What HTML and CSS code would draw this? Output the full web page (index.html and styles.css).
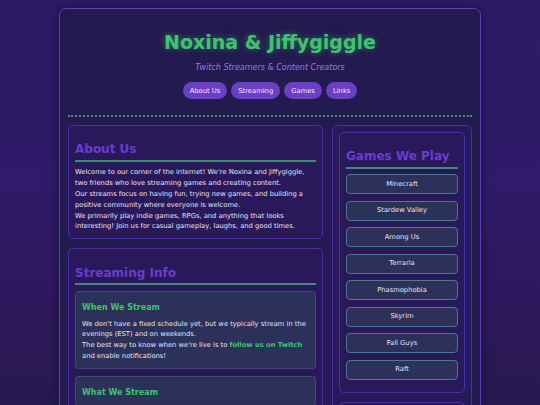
FILE: index.html
```html
<!DOCTYPE html>
<html lang="en">
<head>
<meta charset="utf-8">
<title>Noxina &amp; Jiffygiggle</title>
<link rel="stylesheet" href="styles.css">
</head>
<body>
<div class="container">
  <header class="site-header">
    <h1 class="title">Noxina &amp; Jiffygiggle</h1>
    <p class="subtitle">Twitch Streamers &amp; Content Creators</p>
    <nav class="nav">
      <a class="nav-btn" href="#about">About Us</a>
      <a class="nav-btn" href="#streaming">Streaming</a>
      <a class="nav-btn" href="#games">Games</a>
      <a class="nav-btn" href="#links">Links</a>
    </nav>
  </header>
  <div class="layout">
    <main class="main-col">
      <section class="card" id="about">
        <h2 class="card-title">About Us</h2>
        <p class="text">Welcome to our corner of the internet! We're Noxina and Jiffygiggle, two friends who love streaming games and creating content.</p>
        <p class="text">Our streams focus on having fun, trying new games, and building a positive community where everyone is welcome.</p>
        <p class="text">We primarily play indie games, RPGs, and anything that looks interesting! Join us for casual gameplay, laughs, and good times.</p>
      </section>
      <section class="card" id="streaming">
        <h2 class="card-title">Streaming Info</h2>
        <div class="info-box">
          <h3 class="info-title">When We Stream</h3>
          <p class="text">We don't have a fixed schedule yet, but we typically stream in the evenings (EST) and on weekends.</p>
          <p class="text">The best way to know when we're live is to <a class="green-link" href="#">follow us on Twitch</a> and enable notifications!</p>
        </div>
        <div class="info-box">
          <h3 class="info-title">What We Stream</h3>
          <p class="text">Cozy games, indie discoveries, spooky co-op nights, and whatever our chat talks us into trying next.</p>
        </div>
      </section>
    </main>
    <aside class="side-col">
      <section class="card" id="games">
        <h2 class="card-title">Games We Play</h2>
        <ul class="game-list">
          <li class="game">Minecraft</li>
          <li class="game">Stardew Valley</li>
          <li class="game">Among Us</li>
          <li class="game">Terraria</li>
          <li class="game">Phasmophobia</li>
          <li class="game">Skyrim</li>
          <li class="game">Fall Guys</li>
          <li class="game">Raft</li>
        </ul>
      </section>
      <section class="card" id="links">
        <h2 class="card-title">Links</h2>
        <ul class="game-list">
          <li class="game">Twitch</li>
          <li class="game">Discord</li>
        </ul>
      </section>
    </aside>
  </div>
</div>
</body>
</html>
```
FILE: styles.css
```css
html, body {
  margin: 0;
  padding: 0;
}
body {
  min-height: 100vh;
  font-family: "DejaVu Sans", Verdana, sans-serif;
  color: #e8e3f6;
  background: linear-gradient(180deg, #2c1c66 0%, #2f1b69 45%, #2f185c 75%, #261a50 100%);
  background-attachment: fixed;
}
.container {
  width: 422px;
  box-sizing: border-box;
  margin: 8px auto 0;
  padding: 0 8px 20px;
  background: #231a4f;
  border: 1px solid #5d3db9;
  border-radius: 7px;
  box-shadow: 0 0 12px rgba(10, 5, 30, 0.45);
}
.site-header {
  text-align: center;
  padding: 22px 0 15.5px;
  border-bottom: 2px dotted #3f8f78;
}
.title {
  margin: 0;
  font-size: 19px;
  font-weight: bold;
  color: #3ec46d;
  text-shadow: 0 0 6px rgba(62, 196, 109, 0.55);
  line-height: 22px;
}
.subtitle {
  margin: 9.5px 0 0;
  font-size: 8px;
  font-style: italic;
  color: #9a7ae4;
  line-height: 9.3px;
}
.nav {
  display: flex;
  justify-content: center;
  gap: 4.3px;
  margin-top: 10px;
}
.nav-btn {
  display: block;
  font-size: 6.75px;
  line-height: 8px;
  padding: 4.8px 6.9px;
  border-radius: 9px;
  background: #6a3fc6;
  color: #f2eefc;
  text-decoration: none;
}
.layout {
  display: grid;
  grid-template-columns: 255px 1fr;
  gap: 9px;
  margin-top: 8px;
  align-items: start;
}
.main-col, .side-col {
  display: flex;
  flex-direction: column;
  gap: 9px;
}
.side-col {
  border: 1px solid #4a2fa6;
  border-radius: 6px;
  padding: 6px;
  background: #28195b;
}
.card {
  border: 1px solid #4a2fa6;
  border-radius: 5px;
  padding: 6px;
  background: #29195b;
}
.card-title {
  margin: 10.5px 0 5.5px;
  padding-bottom: 3.5px;
  font-size: 12px;
  line-height: 14px;
  font-weight: bold;
  color: #6a3cd0;
  border-bottom: 2px solid #3f8a78;
}
.text {
  margin: 0;
  font-size: 6.75px;
  line-height: 10.8px;
}
.info-box {
  background: #2b3158;
  border: 1px dotted #56638c;
  border-radius: 4px;
  padding: 6px;
  margin-bottom: 7px;
}
.info-title {
  margin: 5.6px 0 6px;
  font-size: 8px;
  line-height: 9.3px;
  font-weight: bold;
  color: #3ec46d;
}
.green-link {
  color: #3ec46d;
  font-weight: bold;
  text-decoration: none;
}
.game-list {
  list-style: none;
  margin: 0;
  padding: 0;
}
.game {
  font-size: 6.75px;
  line-height: 10.8px;
  padding: 3.6px 4px;
  text-align: center;
  background: #2b3158;
  border: 1px solid #4a7a8c;
  border-radius: 4px;
  margin-bottom: 6.5px;
  color: #e8e3f6;
}
```
